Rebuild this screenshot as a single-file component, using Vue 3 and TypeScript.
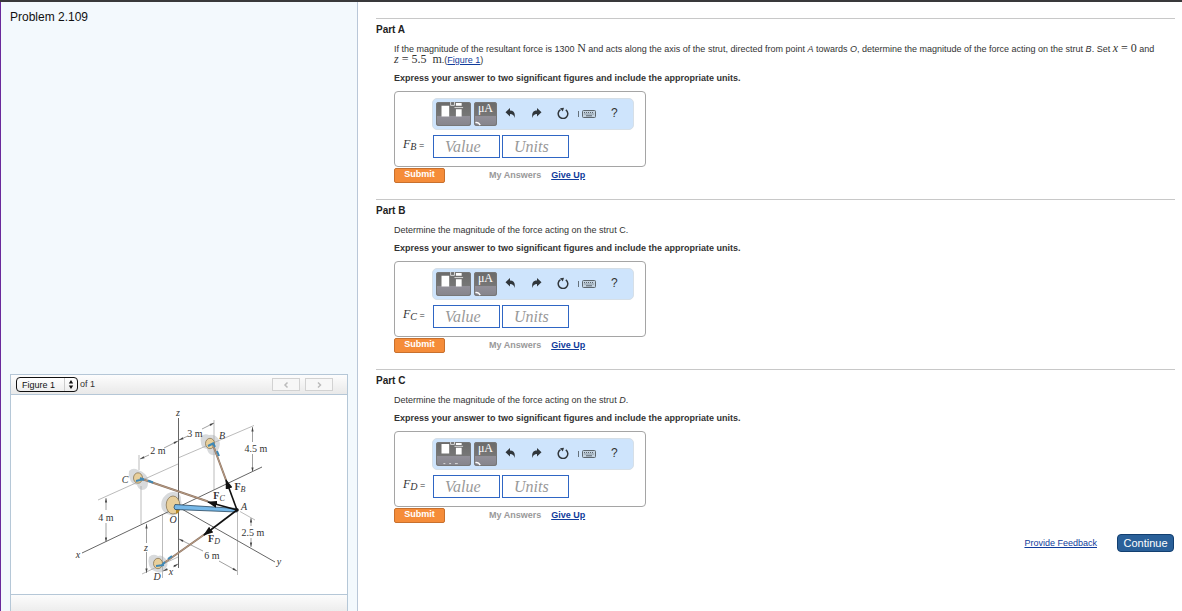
<script setup lang="ts">
import { ref, reactive } from 'vue'

interface Part {
  id: string
  title: string
  sub: string
  value: string
  units: string
}

const parts = reactive<Part[]>([
  { id: 'a', title: 'Part A', sub: 'B', value: '', units: '' },
  { id: 'b', title: 'Part B', sub: 'C', value: '', units: '' },
  { id: 'c', title: 'Part C', sub: 'D', value: '', units: '' },
])

const figure = ref('Figure 1')
</script>

<template>
  <div class="page">
    <aside class="side">
      <h1 class="problem">Problem 2.109</h1>
      <section class="figure" aria-label="Figure">
        <header class="figure-head">
          <span class="picker">
            <select id="figure-select" v-model="figure" aria-label="Figure">
              <option>Figure 1</option>
            </select>
            <svg class="picker-arrows" viewBox="0 0 12 12" aria-hidden="true">
              <path d="M6 1.500 8.200 5H3.800zM6 10.500 8.200 7H3.800z" fill="#111" />
            </svg>
          </span>
          <label class="of" for="figure-select">of 1</label>
          <span class="nav">
            <button type="button" aria-label="Previous figure">
              <svg viewBox="0 0 8 8"><path d="M5.500 1.500 3 4l2.500 2.500" /></svg>
            </button>
            <button type="button" aria-label="Next figure">
              <svg viewBox="0 0 8 8"><path d="M3 1.500 5.500 4 3 6.500" /></svg>
            </button>
          </span>
        </header>

        <svg class="diagram" viewBox="11 395 336 199" role="img" aria-label="Strut and cable diagram">
          <defs>
            <marker id="dim" viewBox="0 0 6 4" refX="6" refY="2" markerWidth="5" markerHeight="3" markerUnits="userSpaceOnUse" orient="auto-start-reverse">
              <path d="M0 .5 6 2 0 3.500z" fill="#444" />
            </marker>
            <marker id="force" viewBox="0 0 10 7" refX="9" refY="3.500" markerWidth="10" markerHeight="7" markerUnits="userSpaceOnUse" orient="auto">
              <path d="M0 0 10 3.500 0 7z" fill="#111" />
            </marker>
          </defs>

          <g fill="#d8dadc">
            <path d="M129 471q4-4 9-1 4 1 7 4 4 4 3 9 0 7-6 7-4-1-5-5-6-1-7-6-2-4-1-8z" />
            <path d="M201 436q4-3 8-1 7-1 10 5 2 5-1 10 0 6-6 5-4-1-5-6-6-1-6-6-1-4 0-7z" />
            <path d="M163 498q5-7 11-6 7 0 7 8 2 8-2 12-4 5-9 3-6-2-8-6-2-6 1-11z" />
            <path d="M149 557q4-4 9-1 4-2 8 3 3 5 0 9-3 6-9 4-7-2-8-7-1-5 0-8z" />
          </g>

          <g class="thin">
            <path d="M98 500 178 464M178 458 254 425.500M214 420V490M139 455V470M141 486V524M162.500 515V578M142 574 178 557M237.500 512V575M240 511.500 255 520" />
          </g>
          <g class="axis">
            <path d="M178.500 418V568M82 553 262 467M180 508 275 562" />
          </g>
          <g class="dims">
            <path d="M149 455 140 459" marker-end="url(#dim)" />
            <path d="M164 448 178 441" marker-end="url(#dim)" />
            <path d="M188 436 179 440" marker-end="url(#dim)" />
            <path d="M202 429 214 423" marker-end="url(#dim)" />
            <path d="M106 510V498" marker-end="url(#dim)" />
            <path d="M106 523V542" marker-end="url(#dim)" />
            <path d="M146.500 543V524" marker-end="url(#dim)" />
            <path d="M146.500 552V573" marker-end="url(#dim)" />
            <path d="M252.500 442V427" marker-end="url(#dim)" />
            <path d="M252.500 454V472" marker-end="url(#dim)" />
            <path d="M251 526V518" marker-end="url(#dim)" />
            <path d="M251 538V547" marker-end="url(#dim)" />
            <path d="M203 551 179 539" marker-end="url(#dim)" />
            <path d="M219 561 237 571" marker-end="url(#dim)" />
            <path d="M168 569 163 571" marker-end="url(#dim)" />
            <path d="M173 567 178 564" marker-end="url(#dim)" />
          </g>

          <g fill="#e8cf9b" stroke="#7d6a48" stroke-width=".7">
            <ellipse cx="138" cy="478" rx="4.500" ry="5.200" />
            <ellipse cx="210" cy="443.500" rx="4.500" ry="5.200" />
            <ellipse cx="173" cy="505" rx="6.800" ry="9" />
            <ellipse cx="158" cy="563.500" rx="4.500" ry="5.200" />
          </g>
          <path d="M176 508v6q3-1 4-5z" fill="#b88a28" />

          <g stroke="#8c7565" stroke-width="2">
            <path d="M142 479 208 501.500M213 445 226 480M164 563 205 534" />
          </g>
          <g stroke="#b79980" stroke-width="1">
            <path d="M142 479 208 501.500M213 445 226 480M164 563 205 534" />
          </g>
          <g stroke="#3f88b5" stroke-width="2" fill="none">
            <path d="M136 481 144 479M140 478 144 480M148 480.500 153 482.500M208 446 214 443M213 443 215 447M217 451 219 456M156 566 164 565M162 565 165 562M168 559 172 556" />
          </g>
          <path d="M175 504.500 237 508.500v3.500L175 509.500q-2-2 0-5z" fill="#76b8e8" stroke="#28485f" stroke-width=".8" />

          <g stroke="#111" stroke-width="1.600">
            <path d="M237 510 226 480" marker-end="url(#force)" />
            <path d="M237 510 208 502" marker-end="url(#force)" />
            <path d="M237 510 204 535" marker-end="url(#force)" />
          </g>
          <circle cx="237" cy="510" r="1.800" fill="#111" />

          <g class="words">
            <text x="158" y="454">2 m</text>
            <text x="195" y="437">3 m</text>
            <text x="256" y="452">4.5 m</text>
            <text x="106" y="521">4 m</text>
            <text x="253" y="536">2.5 m</text>
            <text x="212" y="559">6 m</text>
          </g>
          <g class="words it">
            <text x="178" y="416">z</text>
            <text x="222" y="439">B</text>
            <text x="125" y="483">C</text>
            <text x="173" y="523">O</text>
            <text x="244" y="510">A</text>
            <text x="157" y="580">D</text>
            <text x="78" y="558">x</text>
            <text x="146" y="551">z</text>
            <text x="171" y="575">x</text>
            <text x="279" y="565">y</text>
          </g>
          <g class="words">
            <text x="240" y="490"><tspan class="b">F</tspan><tspan class="s" dy="2">B</tspan></text>
            <text x="219" y="499"><tspan class="b">F</tspan><tspan class="s" dy="2">C</tspan></text>
            <text x="214" y="542"><tspan class="b">F</tspan><tspan class="s" dy="2">D</tspan></text>
          </g>
        </svg>
        <footer class="figure-foot"></footer>
      </section>
    </aside>

    <main class="main">
      <section v-for="p in parts" :key="p.id" class="part">
        <h2>{{ p.title }}</h2>
        <div class="body">
          <p v-if="p.id === 'a'" class="lead">
            If the magnitude of the resultant force is 1300 <span class="math">N</span> and acts along the axis of the
            strut, directed from point <i>A</i> towards <i>O</i>, determine the magnitude of the force acting on the
            strut <i>B</i>. Set <span class="math"><i>x</i> = 0</span> and
            <span class="math"><i>z</i> = 5.5 &nbsp;m</span>.(<a href="#figure-select">Figure 1</a>)
          </p>
          <p v-else-if="p.id === 'b'" class="lead">Determine the magnitude of the force acting on the strut C.</p>
          <p v-else class="lead">Determine the magnitude of the force acting on the strut <i>D</i>.</p>
          <p class="strong">Express your answer to two significant figures and include the appropriate units.</p>

          <div class="answer">
            <div class="tools">
              <button type="button" class="dark wide" aria-label="Templates">
                <svg viewBox="0 0 35 25">
                  <path v-if="p.id !== 'c'" d="M5 4h8v11H5zM20 7.500h6V15h-6zM20 1h6v3h-6z" fill="#fff" />
                  <path v-if="p.id !== 'c'" d="M14.500 0v3.500h4V0M18.500 5.800h9" fill="none" stroke="#ddd" />
                  <path v-if="p.id === 'c'" d="M5 2h8v10H5zM20 6h6v7h-6zM20 1h6v2h-6z" fill="#fff" />
                  <path v-if="p.id === 'c'" d="M14.500 0v2.500h4V0M18.500 4.500h9M7 22.500h2M13 22.500h2M19 22.500h3" fill="none" stroke="#ddd" />
                </svg>
              </button>
              <button type="button" class="dark" aria-label="Symbols">
                <span>μA</span>
                <svg viewBox="0 0 23 25"><path d="M1 21.500q3-1 5 2.500" fill="none" stroke="#fff" stroke-width="1.500" /></svg>
              </button>
              <button type="button" class="plain undo" aria-label="Undo">
                <svg viewBox="0 0 12 12"><path d="M5 1v2.500c4 0 5.500 2.500 4.500 7.500C9 8 7.500 7 5 7v2.500L.5 5.200z" fill="#30363b" /></svg>
              </button>
              <button type="button" class="plain redo" aria-label="Redo">
                <svg viewBox="0 0 12 12"><path d="M7 1v2.500C3 3.500 1.500 6 2.500 11 3 8 4.500 7 7 7v2.500l4.500-4.300z" fill="#30363b" /></svg>
              </button>
              <button type="button" class="plain reset" aria-label="Reset">
                <svg viewBox="0 0 12 12">
                  <path d="M8.800 2.800A4.800 4.800 0 1 1 3.500 2.600" fill="none" stroke="#30363b" stroke-width="1.500" />
                  <path d="M3 1.200 7 .8 5.800 4.600z" fill="#30363b" />
                </svg>
              </button>
              <button type="button" class="plain keys" aria-label="Keyboard shortcuts">
                <svg viewBox="0 0 19 12">
                  <path d="M.5 4v6" stroke="#66727c" />
                  <rect x="4.500" y="3.500" width="13" height="7" rx="1" fill="#c3d2df" stroke="#5d666d" />
                  <path d="M6 5.500h10M6.500 7h9" stroke="#59636b" stroke-dasharray="1 1" />
                  <path d="M8 8.800h6" stroke="#59636b" />
                </svg>
              </button>
              <button type="button" class="plain help" aria-label="Help">?</button>
            </div>
            <div class="entry">
              <label :for="'value-' + p.id"><i>F<sub>{{ p.sub }}</sub></i> =</label>
              <input :id="'value-' + p.id" v-model="p.value" type="text" placeholder="Value" />
              <input v-model="p.units" type="text" placeholder="Units" :aria-label="p.title + ' units'" />
            </div>
          </div>
          <div class="actions">
            <button type="button" class="submit">Submit</button>
            <span class="mine">My Answers</span>
            <a href="#">Give Up</a>
          </div>
        </div>
      </section>
      <footer class="end">
        <a href="#">Provide Feedback</a>
        <button type="button">Continue</button>
      </footer>
    </main>
  </div>
</template>

<style>
body {
  margin: 0;
  background: #fff;
}
</style>

<style scoped>
* {
  box-sizing: border-box;
}
.page {
  display: grid;
  grid-template-columns: 358px minmax(0, 1fr);
  min-height: 100vh;
  border-top: 2px solid #39393b;
  font-family: "Liberation Sans", Arial, sans-serif;
  font-size: 9px;
  line-height: 11px;
  color: #333;
}
button,
input,
select {
  font-family: inherit;
  margin: 0;
}
h1,
h2,
p {
  margin: 0;
}
a {
  color: #103c9c;
}
.side {
  display: flex;
  flex-direction: column;
  justify-content: space-between;
  padding: 8px 9px 0;
  background: #f3f9fd;
  border-left: 1px solid #6a2a9c;
  border-right: 1px solid #b9c7d8;
}
.problem {
  font-size: 12px;
  line-height: 14px;
  font-weight: 400;
  color: #111;
}
.figure {
  border: 1px solid #b5c7d7;
  border-bottom: 0;
  background: #fff;
}
.figure-head {
  display: flex;
  align-items: center;
  height: 20px;
  padding: 0 14px 0 5px;
  border-bottom: 1px solid #b5c7d7;
  background: linear-gradient(#fdfdfd, #e9e9e9);
}
.picker {
  position: relative;
  display: flex;
}
.picker select {
  appearance: none;
  width: 62px;
  height: 15px;
  padding: 0 14px 0 5px;
  border: 1px solid #111;
  border-radius: 4px;
  background: linear-gradient(#fff, #eee);
  font-size: 9px;
  line-height: 12px;
  color: #111;
  outline: 0;
}
.picker-arrows {
  position: absolute;
  right: 1px;
  top: 1px;
  width: 13px;
  height: 13px;
  border-left: 1px solid #ccc;
  pointer-events: none;
}
.of {
  margin-left: 2px;
}
.nav {
  display: flex;
  gap: 5px;
  margin-left: auto;
}
.nav button {
  display: flex;
  align-items: center;
  justify-content: center;
  width: 28px;
  height: 13px;
  padding: 0;
  border: 1px solid #d2d2d2;
  background: #f7f7f7;
}
.nav svg {
  width: 8px;
  height: 8px;
  fill: none;
  stroke: #bbb;
  stroke-width: 1.5;
}
.diagram {
  display: block;
  width: 100%;
}
.thin {
  stroke: #aaa;
  stroke-width: 0.8;
  fill: none;
}
.axis {
  stroke: #666;
  stroke-width: 1;
  fill: none;
}
.dims {
  stroke: #888;
  stroke-width: 0.8;
  fill: none;
}
.words {
  font-family: "Liberation Serif", "Times New Roman", serif;
  font-size: 10px;
  text-anchor: middle;
  fill: #333;
}
.it,
.s {
  font-style: italic;
}
.b {
  font-weight: 700;
}
.s {
  font-size: 8px;
}
.figure-foot {
  height: 17px;
  border-top: 1px solid #b5c7d7;
  background: linear-gradient(#fcfcfc, #ededed);
}
.main {
  padding: 16px 7px 16px 18px;
}
.part {
  padding: 5px 0 16px;
  border-top: 1px solid #c8c8c8;
}
.part:nth-last-of-type(1) {
  padding-bottom: 11px;
}
h2 {
  font-size: 10px;
  line-height: 12px;
  color: #222;
}
.body {
  padding-left: 18px;
}
.lead {
  margin-top: 8px;
}
.strong {
  margin-top: 7px;
  font-weight: 700;
}
.math {
  font-family: "Liberation Serif", "Times New Roman", serif;
  font-size: 12px;
  line-height: 1px;
  white-space: nowrap;
}
.answer {
  width: 252px;
  margin-top: 7px;
  padding: 6px 11px 8px 8px;
  border: 1px solid #a5a5a5;
  border-radius: 4px;
}
.tools {
  display: flex;
  align-items: center;
  height: 32px;
  margin-left: 29px;
  padding: 0 3px;
  border: 1px solid #d6dfe7;
  border-radius: 5px;
  background: #cee4fc;
}
.dark {
  position: relative;
  width: 23px;
  height: 24px;
  margin-right: 3px;
  padding: 0;
  overflow: hidden;
  border: 0;
  border-radius: 3px;
  background: linear-gradient(#6b6b6b, #777 58%, #918f98 60%, #85848b);
  box-shadow: inset 0 0 0 1px #777;
}
.wide {
  width: 35px;
}
.dark svg {
  position: absolute;
  inset: 0;
  width: 100%;
  height: 100%;
}
.dark span {
  display: block;
  height: 24px;
  font-family: "Liberation Serif", "Times New Roman", serif;
  font-size: 12px;
  line-height: 12px;
  color: #fff;
}
.plain {
  display: flex;
  padding: 0 0 2px;
  border: 0;
  background: none;
  font-size: 12px;
  line-height: 14px;
  color: #333;
}
.plain svg {
  width: 12px;
  height: 12px;
}
.undo {
  margin-left: 5px;
}
.redo {
  margin-left: 13px;
}
.reset {
  margin-left: 15px;
}
.keys {
  margin-left: 9px;
}
.keys svg {
  width: 19px;
}
.help {
  margin-left: 14px;
}
.entry {
  display: flex;
  gap: 2px;
  margin-top: 5px;
}
.entry label {
  width: 28px;
  font-size: 9px;
  line-height: 19px;
  white-space: nowrap;
}
.entry i {
  font-family: "Liberation Serif", "Times New Roman", serif;
  font-size: 12px;
}
.entry sub {
  font-size: 10px;
  line-height: 1px;
  vertical-align: -2px;
}
.entry input {
  width: 67px;
  height: 23px;
  padding: 0 11px;
  border: 1px solid #2f66c4;
  border-radius: 0;
  background: #fff;
  font-family: "Liberation Serif", "Times New Roman", serif;
  font-size: 16px;
  font-style: italic;
  color: #333;
  outline: 0;
}
.entry input::placeholder {
  color: #999;
  opacity: 1;
}
.actions {
  display: flex;
  align-items: center;
  margin-top: 1px;
  font-weight: 700;
}
.submit {
  width: 51px;
  height: 15px;
  padding: 0 0 2px;
  border: 1px solid #c8702d;
  border-radius: 2px;
  background: #f58c39;
  font-size: 9px;
  font-weight: 700;
  line-height: 11px;
  color: #fff;
}
.mine {
  margin: 0 10px 0 44px;
  color: #999;
}
.end {
  display: flex;
  align-items: center;
  justify-content: flex-end;
  gap: 20px;
  padding-right: 1px;
}
.end button {
  width: 57px;
  height: 18px;
  padding: 0;
  border: 1px solid #123f70;
  border-radius: 4px;
  background: #2a6099;
  font-size: 11px;
  line-height: 14px;
  color: #fff;
}
</style>
